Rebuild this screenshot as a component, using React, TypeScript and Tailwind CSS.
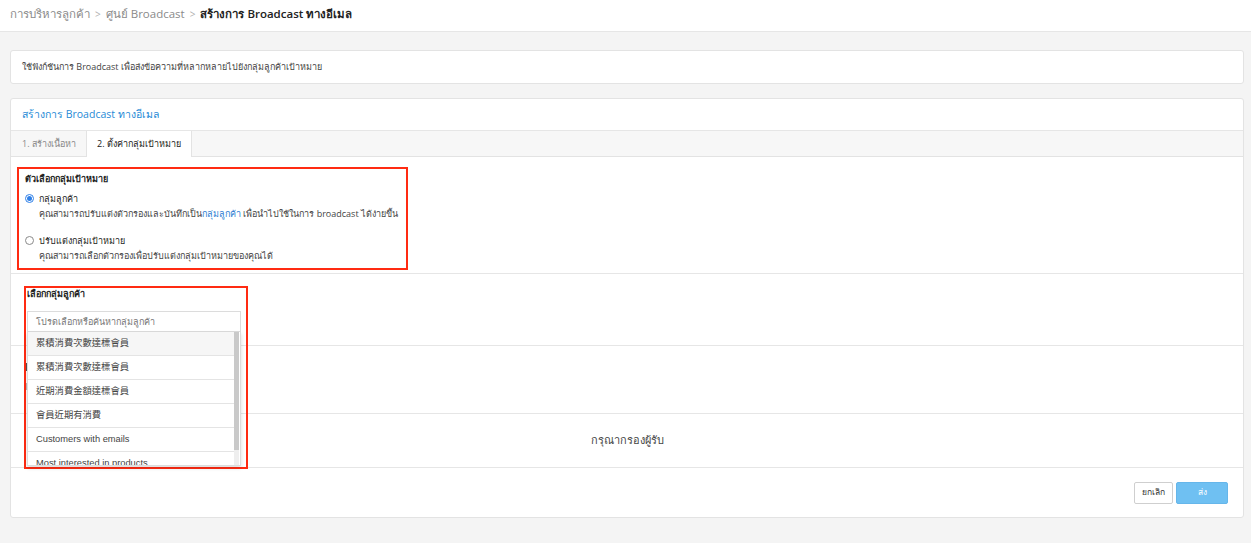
import React from 'react';

const groups = [
  '累積消費次數達標會員',
  '累積消費次數達標會員',
  '近期消費金額達標會員',
  '會員近期有消費',
  'Customers with emails',
  'Most interested in products',
];

const Radio = ({ checked }: { checked?: boolean }) => (
  <span
    className={`mt-[3px] flex h-[9px] w-[9px] shrink-0 items-center justify-center rounded-full border ${
      checked ? 'border-[#2f80e8] bg-white' : 'border-[#8a8a8a] bg-white'
    }`}
  >
    {checked && <span className="h-[5px] w-[5px] rounded-full bg-[#2f80e8]" />}
  </span>
);

export default function App() {
  return (
    <div
      className="min-h-[543px] w-full bg-[#f4f4f4] text-[#333]"
      style={{ fontFamily: '"Open Sans", "Noto Sans", "Noto Sans CJK TC", sans-serif' }}
    >
      {/* breadcrumb */}
      <div className="h-[32px] border-b border-[#e6e6e6] bg-white pl-[10px] pt-[4px]">
        <div className="flex items-center gap-[5px] whitespace-nowrap text-[11.5px] leading-[20px]">
          <span className="text-[#8a8a8a]">การบริหารลูกค้า</span>
          <span className="text-[10px] text-[#b0b0b0]">&gt;</span>
          <span className="text-[#8a8a8a]">ศูนย์ Broadcast</span>
          <span className="text-[10px] text-[#b0b0b0]">&gt;</span>
          <span className="font-semibold text-[#222]">สร้างการ Broadcast ทางอีเมล</span>
        </div>
      </div>

      <div className="pl-[10px] pr-[7px] pt-[18px]">
        {/* info */}
        <div className="flex h-[34px] items-center whitespace-nowrap rounded-[3px] border border-[#e3e3e3] bg-white pl-[11px] text-[9px] text-[#444]">
          ใช้ฟังก์ชันการ Broadcast เพื่อส่งข้อความที่หลากหลายไปยังกลุ่มลูกค้าเป้าหมาย
        </div>

        {/* main card */}
        <div className="mt-[14px] rounded-[3px] border border-[#e3e3e3] bg-white">
          <div className="flex h-[32px] items-center border-b border-[#e6e6e6] pl-[11px] text-[10.5px] text-[#1f8ad6]">
            สร้างการ Broadcast ทางอีเมล
          </div>

          {/* tabs */}
          <div className="flex h-[26px] whitespace-nowrap border-b border-[#e3e3e3] bg-[#f7f7f7] text-[9px]">
            <div className="flex w-[75px] items-center pl-[11px] text-[#888]">1. สร้างเนื้อหา</div>
            <div className="-mb-px flex w-[106px] items-center border-x border-[#e3e3e3] bg-white pl-[10px] font-medium text-[#222]">
              2. ตั้งค่ากลุ่มเป้าหมาย
            </div>
          </div>

          {/* target option */}
          <div className="border-b border-[#e6e6e6] px-[6px] pb-[3px] pt-[10px]">
            <div className="w-[391px] whitespace-nowrap border-[2px] border-[#ff2b12] px-[6px] pb-[5px] pt-[2px] text-[9px]">
              <div className="font-semibold leading-[16px] text-[#222]">ตัวเลือกกลุ่มเป้าหมาย</div>
              <div className="mt-[4px] flex gap-[5px]">
                <Radio checked />
                <div>
                  <div className="leading-[15px] text-[#222]">กลุ่มลูกค้า</div>
                  <div className="leading-[15px] text-[#444]">
                    คุณสามารถปรับแต่งตัวกรองและบันทึกเป็น<span className="text-[#2f7fd3]">กลุ่มลูกค้า</span> เพื่อนำไปใช้ในการ broadcast ได้ง่ายขึ้น
                  </div>
                </div>
              </div>
              <div className="mt-[12px] flex gap-[5px]">
                <Radio />
                <div>
                  <div className="leading-[15px] text-[#222]">ปรับแต่งกลุ่มเป้าหมาย</div>
                  <div className="leading-[15px] text-[#444]">คุณสามารถเลือกตัวกรองเพื่อปรับแต่งกลุ่มเป้าหมายของคุณได้</div>
                </div>
              </div>
            </div>
          </div>

          {/* customer group */}
          <div className="relative z-10 h-[72px] border-b border-[#e6e6e6] pl-[16px] pt-[12px] text-[9px]">
            <div className="pointer-events-none absolute left-[13px] top-[12px] h-[183px] w-[224px] border-[2.5px] border-[#ff2b12]" />
            <div className="font-semibold leading-[16px] text-[#222]">เลือกกลุ่มลูกค้า</div>
            <div className="relative mt-[9px] w-[214px]">
              <div className="flex h-[21px] items-center border border-[#dcdcdc] bg-white pl-[8px] text-[#777]">
                โปรดเลือกหรือค้นหากลุ่มลูกค้า
              </div>
              <div className="absolute left-0 top-full h-[134px] w-full overflow-hidden border border-t-0 border-[#dcdcdc] bg-white shadow-[0_2px_4px_rgba(0,0,0,0.15)]">
                <div className="mr-[6px]" style={{ fontFamily: '"Liberation Sans", "Noto Sans CJK TC", sans-serif' }}>
                  {groups.map((g, i) => (
                    <div
                      key={i}
                      className={`flex h-[24px] items-center whitespace-nowrap border-b border-[#e4e4e4] pl-[8px] text-[9.3px] text-[#444] ${
                        i === 0 ? 'bg-[#f6f6f6]' : ''
                      }`}
                    >
                      {g}
                    </div>
                  ))}
                </div>
                <div className="absolute right-[1px] top-0 h-full w-[5px] bg-[#eeeeee]">
                  <div className="h-[118px] w-full bg-[#c9c9c9]" />
                </div>
              </div>
            </div>
          </div>

          {/* filter row, mostly covered by the open dropdown */}
          <div className="flex h-[68px] flex-col gap-[12px] border-b border-[#e6e6e6] pl-[15px] pt-[17px]">
            <span className="h-[8px] w-[4px] bg-[#555]" />
            <span className="h-[7px] w-[4px] bg-[#bbb]" />
          </div>

          {/* empty recipients */}
          <div className="flex h-[54px] items-center justify-center border-b border-[#e6e6e6] text-[11px] text-[#444]">
            กรุณากรองผู้รับ
          </div>

          {/* footer */}
          <div className="flex h-[49px] items-center justify-end gap-[3px] pr-[15px]">
            <button className="h-[22px] w-[39px] rounded-[2px] border border-[#cfcfcf] bg-white text-[8.5px] text-[#333]">
              ยกเลิก
            </button>
            <button className="h-[22px] w-[52px] rounded-[2px] border border-[#66b6ea] bg-[#6fc0f2] text-[8.5px] text-white">
              ส่ง
            </button>
          </div>
        </div>
      </div>
    </div>
  );
}
